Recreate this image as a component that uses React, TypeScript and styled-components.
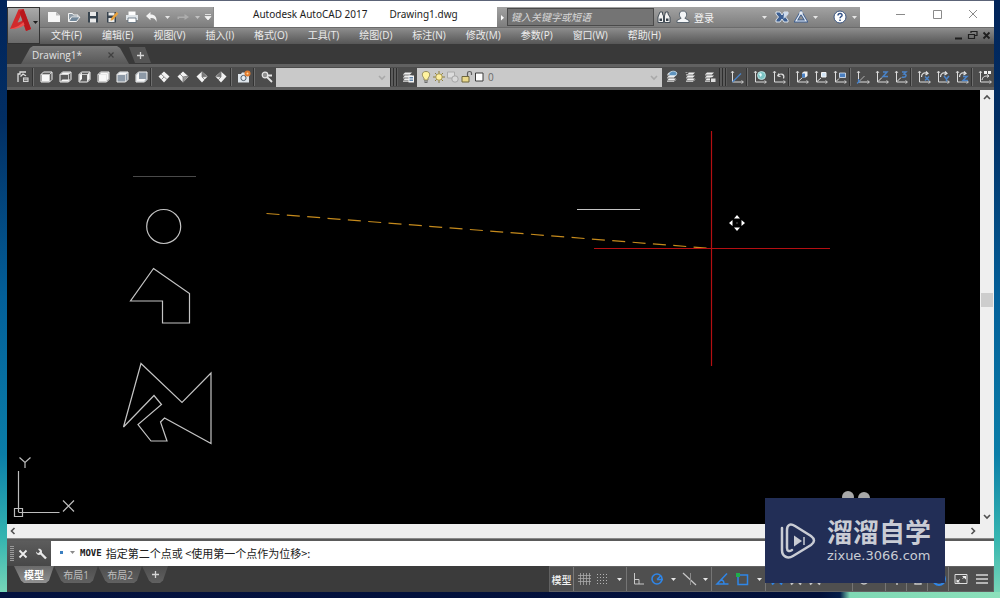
import React from "react";
import styled, { createGlobalStyle } from "styled-components";

const GlobalStyle = createGlobalStyle`
  * { box-sizing: border-box; }
  body {
    margin: 0;
    font-family: "Open Sans", "Noto Sans CJK SC", sans-serif;
    font-size: 10px;
    color: #e4e4e4;
  }
  button, input, select {
    font: inherit;
    color: inherit;
    margin: 0;
    padding: 0;
    border: 0;
    border-radius: 0;
    background: none;
  }
  svg { display: block; flex: none; }
`;

/* ---------- desktop and window ---------- */

const Desktop = styled.div`
  position: relative;
  display: flex;
  flex-direction: column;
  min-height: 100vh;
  padding: 0 6px 6px 7px;
  background:
    linear-gradient(90deg, #04123f 0, #02103a 82%, #041c48 84%, #7fd8b4 85%, #8ce0bb 100%) bottom / 100% 6px no-repeat,
    linear-gradient(#01245a 0, #022e63 20%, #03609a 50%, #0b7ea8 76%, #35b5b0 90%, #7ed9b8 100%);
`;

const Window = styled.div`
  flex: 1;
  display: flex;
  flex-direction: column;
  min-width: 0;
  background: #3b3b3b;
`;

const Header = styled.header`
  display: grid;
  grid-template-columns: 33px minmax(0, 1fr);
  border-top: 1px solid #5c6478;
  background: #ffffff;
`;

const AppButton = styled.button`
  grid-row: 1 / 3;
  display: flex;
  align-items: flex-start;
  margin-top: 6px;
  padding-left: 2px;
  border: 1px solid #333333;
  background: linear-gradient(#aaaaaa, #6a6a6a);
`;

const AppCaret = styled.span`
  padding-top: 12px;
`;

const TitleRow = styled.div`
  display: flex;
  align-items: flex-end;
  height: 26px;
`;

const QuickAccess = styled.div`
  display: flex;
  align-items: center;
  width: 174px;
  height: 20px;
  padding-left: 4px;
  background: linear-gradient(#a2a2a2, #7d7d7d);
  border-right: 1px solid #8b8b8b;
`;

const ToolButton = styled.button<{ $w?: number }>`
  display: flex;
  flex: none;
  align-items: center;
  justify-content: center;
  width: ${(p) => p.$w ?? 19}px;
  height: 18px;
`;

const Title = styled.h1`
  flex: 1;
  display: flex;
  gap: 22px;
  align-items: center;
  height: 26px;
  margin: 0;
  padding-left: 39px;
  font-family: "Noto Sans", sans-serif;
  font-size: 10px;
  font-weight: 400;
  color: #1c1c1c;
  white-space: nowrap;
`;

const InfoCenter = styled.div`
  display: flex;
  align-items: center;
  width: 363px;
  height: 20px;
  background: linear-gradient(#a2a2a2, #7d7d7d);
`;

const InfoGap = styled.span`
  flex: none;
  width: 12px;
`;

const SearchInput = styled.input`
  width: 147px;
  height: 18px;
  padding-left: 3px;
  border: 1px solid #4a4a4a;
  background: #747474;
  font-style: italic;
  &::placeholder { color: #d8d8d8; opacity: 1; }
`;

const SignIn = styled.button`
  display: flex;
  align-items: center;
  gap: 4px;
  padding-left: 3px;
  color: #f4f4f4;
`;

const Spacer = styled.div`
  flex: 1;
`;

const WindowButtons = styled.div`
  display: flex;
  align-items: center;
  width: 134px;
  height: 26px;
  padding-left: 22px;
  color: #8a8a8a;
`;

const MenuBar = styled.nav`
  display: flex;
  align-items: center;
  gap: 20px;
  height: 17px;
  padding: 0 0 2px 11px;
  background: linear-gradient(#8d8d8d, #565656);
  border-top: 1px solid #6c6c6c;
`;

const MenuItem = styled.button`
  line-height: 14px;
  color: #ececec;
  white-space: nowrap;
`;

const DocButtons = styled.div`
  display: flex;
  align-items: center;
  gap: 2px;
  padding-right: 2px;
  color: #1f1f1f;
`;

/* ---------- file tabs and toolbar ---------- */

const FileTabs = styled.div`
  display: flex;
  align-items: flex-end;
  height: 20px;
  padding-left: 14px;
  background: #393939;
`;

const FileTab = styled.button`
  display: flex;
  align-items: center;
  justify-content: space-between;
  width: 108px;
  height: 18px;
  padding: 0 14px 0 11px;
  background: linear-gradient(#7a7a7a, #585858);
  clip-path: polygon(12px 0, 96px 0, 99px 2px, 108px 100%, 0 100%, 9px 2px);
  color: #e2e2e2;
`;

const NewFileTab = styled.button`
  display: flex;
  align-items: center;
  justify-content: center;
  width: 22px;
  height: 16px;
  margin: 0 0 1px 0;
  background: #555555;
  clip-path: polygon(0 0, 16px 0, 22px 100%, 6px 100%);
`;

const Toolbar = styled.div`
  display: flex;
  align-items: center;
  height: 26px;
  padding-left: 6px;
  background: linear-gradient(#616161 0, #616161 3px, #4c4c4c 3px, #4c4c4c 23px, #5e5e5e 23px);
  overflow: hidden;
`;

const Divider = styled.span`
  flex: none;
  width: 4px;
  height: 18px;
  border-left: 1px solid #333333;
  box-shadow: inset 1px 0 #6e6e6e;
`;

const Grip = styled.span`
  flex: none;
  width: 8px;
  height: 18px;
  background: repeating-linear-gradient(90deg, #2e2e2e 0, #2e2e2e 1px, #5c5c5c 1px, #5c5c5c 3px);
`;

const Combo = styled.div<{ $grow?: boolean }>`
  display: flex;
  align-items: center;
  flex: ${(p) => (p.$grow ? "1 1 0" : "0 0 114px")};
  min-width: 0;
  height: 19px;
  padding: 0 3px;
  background: #c9c9c9;
  color: #6b6b6b;
  select {
    flex: 1;
    min-width: 0;
    appearance: none;
    padding-left: 3px;
  }
`;

/* ---------- drawing area ---------- */

const Work = styled.main`
  flex: 1;
  display: grid;
  grid-template-columns: minmax(0, 1fr) 14px;
  grid-template-rows: minmax(430px, 1fr) 14px;
  background: #efefef;
  border-bottom: 1px solid #8a8a8a;
`;

const Canvas = styled.div`
  background: #000000;
  svg { width: 100%; height: 100%; }
`;

const VScroll = styled.div`
  display: flex;
  flex-direction: column;
  align-items: center;
  justify-content: space-between;
  padding: 2px 0 3px;
  color: #505050;
`;

const Thumb = styled.span`
  width: 12px;
  height: 14px;
  margin-bottom: 14px;
  background: #cdcdcd;
`;

const HScroll = styled.div`
  grid-column: 1 / 3;
  display: flex;
  align-items: center;
  justify-content: space-between;
  padding: 0 16px 0 1px;
  color: #505050;
`;

const ScrollButton = styled.button`
  display: flex;
`;

const CommandLine = styled.form`
  display: flex;
  height: 27px;
  border-top: 2px solid #5a5a5a;
  background: #ffffff;
`;

const CommandTools = styled.div`
  display: flex;
  align-items: center;
  width: 44px;
  padding-left: 3px;
  background: linear-gradient(#5c5c5c, #474747);
`;

const Dots = styled.span`
  width: 4px;
  height: 15px;
  background: repeating-linear-gradient(#9a9a9a 0, #9a9a9a 1px, #555555 1px, #555555 2px);
`;

const Prompt = styled.label`
  display: flex;
  align-items: center;
  gap: 4px;
  padding: 0 0 2px 8px;
  font-family: "Noto Sans CJK SC", sans-serif;
  font-size: 11px;
  color: #202020;
  white-space: nowrap;
  b {
    font-family: "DejaVu Sans Mono", monospace;
    font-size: 9px;
  }
`;

const CommandInput = styled.input`
  flex: 1;
  min-width: 0;
  color: #202020;
`;

/* ---------- bottom bar ---------- */

const BottomBar = styled.footer`
  display: flex;
  justify-content: space-between;
  height: 26px;
  background: #3b3b3b;
`;

const LayoutTabs = styled.div`
  display: flex;
  padding-left: 7px;
`;

const LayoutTab = styled.button<{ $active?: boolean; $w?: number }>`
  display: flex;
  align-items: center;
  justify-content: center;
  width: ${(p) => p.$w ?? 44}px;
  height: 17px;
  background: ${(p) => (p.$active ? "linear-gradient(#6a6a6a, #909090)" : "linear-gradient(#4d4d4d, #616161)")};
  clip-path: polygon(0 0, 100% 0, calc(100% - 5px) 86%, calc(100% - 8px) 100%, 10px 100%, 7px 86%);
  color: ${(p) => (p.$active ? "#ffffff" : "#bdbdbd")};
  font-weight: ${(p) => (p.$active ? 700 : 400)};
`;

const StatusBar = styled.div`
  display: flex;
  align-items: center;
  width: 445px;
  padding-right: 2px;
  background: #4f4f4f;
  border: 1px solid #626262;
`;

const ModelButton = styled.button`
  width: 24px;
  height: 24px;
  border-right: 1px solid #7a7a7a;
  color: #f2f2f2;
  font-weight: 500;
`;

const StatusDivider = styled.span`
  flex: none;
  width: 2px;
  height: 24px;
  border-left: 1px solid #757575;
`;

/* ---------- watermark card ---------- */

const Watermark = styled.aside`
  position: absolute;
  right: 55px;
  bottom: 15px;
  display: flex;
  align-items: center;
  gap: 11px;
  width: 180px;
  height: 85px;
  padding-left: 15px;
  background: #222e56;
  color: #c9ccd4;
`;

const Brand = styled.div`
  display: flex;
  flex-direction: column;
  font-family: "Liberation Sans", "Noto Sans CJK SC", sans-serif;
  strong {
    font-size: 26px;
    line-height: 30px;
    font-weight: 700;
    white-space: nowrap;
  }
  span {
    font-family: "DejaVu Sans", sans-serif;
    font-size: 13px;
    line-height: 15px;
  }
`;

/* ---------- icons ---------- */

const Icon = ({ w = 14, h = 14, children }: { w?: number; h?: number; children: React.ReactNode }) => (
  <svg width={w} height={h} viewBox={`0 0 ${w} ${h}`} fill="none" aria-hidden="true">
    {children}
  </svg>
);

const Caret = ({ color = "#e6e6e6" }: { color?: string }) => (
  <Icon w={7} h={5}>
    <path d="M1 1h5L3.5 4z" fill={color} />
  </Icon>
);

const Chevron = ({ dir, color = "currentColor" }: { dir: "up" | "down" | "left" | "right"; color?: string }) => {
  const d = { up: "M2 7l3-3 3 3", down: "M2 4l3 3 3-3", left: "M6.500 2l-3 3 3 3", right: "M3.500 2l3 3-3 3" }[dir];
  return (
    <Icon w={10} h={10}>
      <path d={d} stroke={color} strokeWidth="1.6" />
    </Icon>
  );
};

const Plus = () => (
  <Icon w={9} h={9}>
    <path d="M4.500 1v7M1 4.500h7" stroke="#d6d6d6" strokeWidth="1.300" />
  </Icon>
);

const Cube = ({ face }: { face: number }) => (
  <Icon>
    <path d="M2 4.500L4.500 2H13v7.500L10.500 12H2z" fill={face > 3 ? "#8d99a6" : "#5b5b5b"} stroke="#f0f0f0" />
    {face === 0 && <path d="M3 5h7v6.500H3z" fill="#f7f7f7" />}
    {face === 1 && <path d="M2.500 4.500L5 2.500h7.500L10 4.500zM4.500 9.500h8L10 11.500H2.500z" fill="#f7f7f7" />}
    {face === 2 && <path d="M2.500 5L5 2.500V9L2.500 11.500zM10 5l2.500-2.500V9L10 11.500z" fill="#f7f7f7" />}
    {face === 3 && <path d="M5 2.500h7.500V9L10 11.500H3V5z" fill="#f7f7f7" />}
    {face === 4 && <path d="M2.500 4.500L5 2.500h7.500L10 5H2.500z" fill="#f7f7f7" />}
    {face === 5 && <path d="M2.500 5L5 2.500V9h7l-2 2.500H2.500z" fill="#f7f7f7" />}
    {face < 5 && <path d="M2 4.500h8.500V12M10.500 4.500L13 2" stroke="#e2e2e2" strokeWidth=".8" />}
  </Icon>
);

const IsoCube = ({ face }: { face: number }) => (
  <Icon>
    <path d="M7 1.500l5.500 5L7 12.500 1.500 6.500z" fill="#f2f2f2" />
    {face === 0 && <path d="M4 4l6 5.500M7 7L4.500 9.500" stroke="#777" strokeWidth=".8" />}
    {face === 1 && <path d="M7 7l5-1-5 6zM4 4l3 3" fill="#9c9c9c" stroke="#777" strokeWidth=".8" />}
    {face === 2 && <path d="M7 2l4.500 4.500L7 7zM7 7l3 3" fill="#777" stroke="#777" strokeWidth=".8" />}
    {face === 3 && <path d="M7 2L2.500 6.500 7 7zM7 7l-3 3" fill="#777" stroke="#777" strokeWidth=".8" />}
  </Icon>
);

const Camera = () => (
  <Icon>
    <path d="M1 4h3l1-1.500h3L9 4h3v8.500H1z" fill="#dfe6ec" />
    <circle cx="6.500" cy="8" r="2.600" fill="#e9eef2" stroke="#4c5a66" />
    <circle cx="10.500" cy="3.500" r="3" fill="#e07a2c" />
    <circle cx="10.500" cy="3.500" r="1" fill="#ffd9a0" />
  </Icon>
);

const Layers = ({ variant = 0 }: { variant?: number }) => (
  <Icon>
    <path d="M4 2.500h7L9 4.500H2zM4 5.500h7l-2 2H2zM4 8.500h7l-2 2H2z" fill="#eeeeee" />
    <path d="M2 5h7M2 8h7M2 11.500h7l2-2" stroke="#d5d5d5" strokeWidth=".8" />
    {variant === 0 && (
      <>
        <path d="M7.500 5.500H13v7H7.500z" fill="#f4f4f4" />
        <path d="M8.500 7.500h3.500M8.500 9h3.500M8.500 10.500h3.500" stroke="#3c6796" strokeWidth=".8" />
      </>
    )}
    {variant === 1 && <path d="M4 4.500C4 1 10 0 12 3l-1 2.500H5z" fill="#5f93bd" stroke="#cfe4f3" strokeWidth=".8" />}
    {variant === 2 && <path d="M1 1.500h3v2H1z" fill="#9a9a9a" stroke="#4c4c4c" />}
    {variant === 3 && <path d="M7.500 8H13v4.500H7.500z" fill="#dedede" stroke="#4c4c4c" />}
  </Icon>
);

const UcsIcon = ({ kind }: { kind: string }) => (
  <Icon>
    <path d="M2.500 1.500v10.500H13" stroke="#dcdcdc" />
    <path d="M1 3l1.500-2L4 3M11.500 10.500l2 1.500-2 1.500" stroke="#dcdcdc" strokeWidth=".8" />
    {kind === "ucs" && <path d="M2.500 12L11 3.500" stroke="#4a83c8" strokeWidth="1.200" />}
    {kind === "world" && (
      <>
        <circle cx="8.500" cy="5.500" r="4" fill="#7cc4c4" stroke="#cdeeee" strokeWidth=".8" />
        <path d="M6 4l2-1 1 2-1.500 2z" fill="#e2fafa" />
      </>
    )}
    {kind === "prev" && <path d="M5.500 6l1.500-2.500M5.500 6l3 .5M6 5.500c3-3 7-1 5.500 3" stroke="#e2e2e2" strokeWidth="1.200" />}
    {kind === "face" && (
      <>
        <path d="M3 11.500L7 8" stroke="#dcdcdc" />
        <path d="M7 3l2-1.500h3.500V6l-2 1.500H7z" fill="#f0f0f0" />
        <path d="M7 3.500h3v4H7z" fill="#4a83c8" />
      </>
    )}
    {kind === "object" && (
      <>
        <path d="M3 11.500L7 8" stroke="#dcdcdc" />
        <path d="M7.500 2.500h4.500v4.500H7.500z" fill="#cfe3f5" stroke="#f4f4f4" />
      </>
    )}
    {kind === "view" && (
      <>
        <path d="M3 11.500L6 8.500" stroke="#dcdcdc" />
        <path d="M6.500 3h6v4.500h-6z" fill="#4a7fc0" stroke="#dfe9f4" strokeWidth=".8" />
      </>
    )}
    {kind === "origin" && (
      <>
        <path d="M2.500 12l6-6" stroke="#b0b0b0" />
        <path d="M2.500 13V9M1 13.500l3-3" stroke="#4a83c8" strokeWidth="1.200" />
      </>
    )}
    {kind === "z" && <path d="M3 11.500L7 7.500" stroke="#dcdcdc" />}
    {kind === "z" && <path d="M8 2h4L8 6.500h5" stroke="#4a83c8" strokeWidth="1.500" />}
    {kind === "3" && <path d="M3 11.500L7 7.500" stroke="#dcdcdc" />}
    {kind === "3" && <path d="M8 2h4L10 4c3 0 3 4-2 3" stroke="#4a83c8" strokeWidth="1.500" />}
    {kind.startsWith("rot") && <path d="M4.500 7c0-4 3-5 6-3.500M9 1.500l2 2-2.500 1.500" stroke="#e2e2e2" strokeWidth="1.200" />}
    {kind === "rotx" && <path d="M8 6.500l4 4M12 6.500l-4 4" stroke="#4a83c8" strokeWidth="1.500" />}
    {kind === "roty" && <path d="M8 6l2.500 3L13 6M10.500 9v2.500" stroke="#4a83c8" strokeWidth="1.500" />}
    {kind === "rotz" && <path d="M8 6.500h4l-4 4h5" stroke="#4a83c8" strokeWidth="1.500" />}
    {kind === "apply" && (
      <>
        <path d="M4 10c1-4 3-4 6-4M9 4.500l2 1.500-2 1.500" stroke="#e2e2e2" />
        <path d="M6 1h3v3H6zM10 1h3v3h-3z" fill="#f0f0f0" />
      </>
    )}
  </Icon>
);

const menus = [
  "文件(F)", "编辑(E)", "视图(V)", "插入(I)", "格式(O)", "工具(T)",
  "绘图(D)", "标注(N)", "修改(M)", "参数(P)", "窗口(W)", "帮助(H)",
];

const ucsGroups = [
  ["ucs"],
  ["world", "prev"],
  ["face", "object", "view"],
  ["origin", "z", "3"],
  ["rotx", "roty", "rotz"],
  ["apply"],
];

function TitleBar() {
  return (
    <Header>
      <AppButton aria-label="应用程序菜单">
        <svg width="22" height="25" viewBox="0 0 22 25" aria-hidden="true">
          <path d="M0 21L8.500 1.500 13.500 1l7.500 20-5 2-2-6c-3 1.500-6 2.500-9 3.500zM11 7L7.500 14.500c2-.3 3.600-1 5-2z" fill="#d12a2d" fillRule="evenodd" />
          <path d="M13.500 1L21 21l-5 2L9.500 4z" fill="#b9181d" />
          <path d="M0 21c4-1 9-2.500 13.500-7l1 3C10 20 5 21.500 0 21z" fill="#ee5150" />
        </svg>
        <AppCaret><Caret color="#1e1e1e" /></AppCaret>
      </AppButton>
      <TitleRow>
        <QuickAccess>
          <ToolButton $w={20} aria-label="新建">
            <Icon>
              <path d="M1 2h8l4 3.500V12H1z" fill="#f6f6f6" />
              <path d="M9 2v3.500h4z" fill="#b9b9b9" />
            </Icon>
          </ToolButton>
          <ToolButton aria-label="打开">
            <Icon>
              <path d="M1.500 11.500v-8h4l1 1.500H11v2M1.500 11.500L4.500 7H13l-3.500 4.500z" fill="#8d9aa5" stroke="#f4f4f4" />
              <path d="M5 7.500h7l-3 3.500H3z" fill="#71879a" />
            </Icon>
          </ToolButton>
          <ToolButton aria-label="保存">
            <Icon>
              <path d="M2 2h10v10.500H2z" fill="#38444f" />
              <path d="M4 2h6v4H4zM4 8.500h6v4H4z" fill="#eaeaea" />
            </Icon>
          </ToolButton>
          <ToolButton $w={20} aria-label="另存为">
            <Icon>
              <path d="M2 2h9v10.500H2z" fill="#38444f" />
              <path d="M3.500 2.500h6v3h-6zM3.500 8h6v4h-6z" fill="#eaeaea" />
              <path d="M6 8.500L11.500 2l2 1.500L8 10l-2.500.8z" fill="#e9a13b" />
            </Icon>
          </ToolButton>
          <ToolButton $w={20} aria-label="打印">
            <Icon>
              <path d="M3.500 1.500h7V5h-7z" fill="#ffffff" />
              <path d="M1 5h12v5H1z" fill="#dfe4e8" />
              <path d="M3 8h8v4.500H3z" fill="#ffffff" stroke="#5a6b79" strokeWidth=".8" />
            </Icon>
          </ToolButton>
          <ToolButton aria-label="放弃">
            <Icon>
              <path d="M1 6l4.500-4v2.500C10 4.500 12 7 11.500 12 10.500 9 9 7.800 5.500 8v2.300z" fill="#f2f2f2" />
            </Icon>
          </ToolButton>
          <ToolButton $w={12} aria-label="放弃列表"><Caret /></ToolButton>
          <ToolButton aria-label="重做">
            <Icon>
              <path d="M1.500 9V6.500h7V4L13 7l-4.500 3V8H3v1z" fill="#adadad" />
            </Icon>
          </ToolButton>
          <ToolButton $w={11} aria-label="重做列表"><Caret color="#c2c2c2" /></ToolButton>
          <ToolButton $w={10} aria-label="自定义快速访问工具栏">
            <Icon w={8} h={8}>
              <path d="M1 1.500h6M1 3.500h6L4 7z" stroke="#f4f4f4" fill="#f4f4f4" strokeWidth=".8" />
            </Icon>
          </ToolButton>
        </QuickAccess>
        <Title>
          <span>Autodesk AutoCAD 2017</span>
          <span>Drawing1.dwg</span>
        </Title>
        <InfoCenter>
          <ToolButton $w={10} aria-label="展开搜索">
            <Icon w={5} h={7}><path d="M1 1v5.500L4 3.800z" fill="#ffffff" /></Icon>
          </ToolButton>
          <SearchInput aria-label="搜索" placeholder="键入关键字或短语" />
          <ToolButton aria-label="查找">
            <Icon>
              <path d="M3 2h2.500v2L6.500 6v6.500H1V7zM8.500 2H11v2l2 3v5.500H7.500V6z" fill="#f2f2f2" stroke="#37424c" strokeWidth=".9" />
              <path d="M2.500 8.500h2.500v2.500H2.500zM9 8.500h2.500v2.500H9z" fill="#37424c" />
            </Icon>
          </ToolButton>
          <SignIn>
            <Icon>
              <path d="M7 1c5 0 4 6 1.800 7.200L13 10.500v2H1v-2l4.200-2.300C3 7 2 1 7 1z" fill="#f4f6f8" stroke="#4f5b66" strokeWidth=".9" />
            </Icon>
            登录
          </SignIn>
          <Spacer />
          <ToolButton $w={16} aria-label="登录选项"><Caret /></ToolButton>
          <ToolButton $w={20} aria-label="Exchange">
            <Icon>
              <path d="M1 2h4l2 3 2-3h4v2l-2.500 3L13 10v2H9L7 9l-2 3H1v-2l2.500-3L1 4z" fill="#3d5f92" stroke="#e8eef5" strokeWidth=".9" />
              <path d="M9 2h4v2l-4.500 5z" fill="#cfdced" />
            </Icon>
          </ToolButton>
          <ToolButton $w={18} aria-label="Autodesk 360">
            <Icon>
              <path d="M7 2.500L12 11H2z" stroke="#3d5f92" strokeWidth="3" />
              <path d="M7 2.500L12 11H2z" stroke="#e8eef5" strokeWidth="1.200" />
              <circle cx="7" cy="3" r="1.800" fill="#e8eef5" />
            </Icon>
          </ToolButton>
          <ToolButton $w={10} aria-label="360 选项"><Caret /></ToolButton>
          <InfoGap />
          <ToolButton $w={16} aria-label="帮助">
            <Icon>
              <circle cx="7" cy="7" r="6" fill="#ffffff" stroke="#3b5580" />
              <path d="M5 5.500c0-3 4.500-2.500 4 0-.3 1-2 1.300-2 2.800M7 9.500v1.500" stroke="#2f4f86" strokeWidth="1.500" />
            </Icon>
          </ToolButton>
          <ToolButton $w={12} aria-label="帮助选项"><Caret /></ToolButton>
        </InfoCenter>
        <WindowButtons>
          <ToolButton $w={36} aria-label="最小化"><Icon w={10} h={10}><path d="M1 5.500h9" stroke="currentColor" /></Icon></ToolButton>
          <ToolButton $w={37} aria-label="最大化"><Icon w={10} h={10}><path d="M1.500 1.500h8v8h-8z" stroke="currentColor" /></Icon></ToolButton>
          <ToolButton $w={36} aria-label="关闭"><Icon w={10} h={10}><path d="M1 1l8 8M9 1L1 9" stroke="currentColor" /></Icon></ToolButton>
        </WindowButtons>
      </TitleRow>
      <MenuBar>
        {menus.map((m) => <MenuItem key={m}>{m}</MenuItem>)}
        <Spacer />
        <DocButtons>
          <ToolButton $w={12} aria-label="最小化文档"><Icon w={9} h={9}><path d="M1 7.500h7" stroke="currentColor" strokeWidth="2" /></Icon></ToolButton>
          <ToolButton $w={12} aria-label="还原文档">
            <Icon w={11} h={10}><path d="M4 3V1.500h6v4H7.500M1.500 4.500h6v4h-6z" stroke="currentColor" strokeWidth="1.200" /></Icon>
          </ToolButton>
          <ToolButton $w={12} aria-label="关闭文档"><Icon w={9} h={9}><path d="M1.500 1.500l6 6M7.500 1.500l-6 6" stroke="currentColor" strokeWidth="1.800" /></Icon></ToolButton>
        </DocButtons>
      </MenuBar>
    </Header>
  );
}

function ToolRow() {
  return (
    <Toolbar>
      <ToolButton aria-label="命名视图">
        <Icon>
          <path d="M2 12V4h2V2h6M4.500 6.500L7 4l3 2" stroke="#dedede" strokeWidth="1.300" />
          <path d="M6.500 7H13v5.500H6.500z" fill="#d5d5d5" stroke="#3e3e3e" strokeWidth=".8" />
          <path d="M8 9h3.500M8 10.500h3.500" stroke="#555" strokeWidth=".8" />
        </Icon>
      </ToolButton>
      <Divider />
      {[0, 1, 2, 3, 4, 5].map((f) => <ToolButton key={f} aria-label={`正交视图 ${f + 1}`}><Cube face={f} /></ToolButton>)}
      <Divider />
      {[0, 1, 2, 3].map((f) => <ToolButton key={f} aria-label={`等轴测 ${f + 1}`}><IsoCube face={f} /></ToolButton>)}
      <Divider />
      <ToolButton aria-label="相机"><Camera /></ToolButton>
      <Divider />
      <ToolButton aria-label="缩放">
        <Icon>
          <circle cx="5" cy="5" r="2.800" fill="#8f8f8f" stroke="#e6e6e6" strokeWidth="1.200" />
          <path d="M7 7l5 5M7 5.500h5" stroke="#e6e6e6" strokeWidth="1.800" />
        </Icon>
      </ToolButton>
      <Combo>
        <select aria-label="视图"><option /></select>
        <Chevron dir="down" color="#a9a9a9" />
      </Combo>
      <Grip />
      <ToolButton aria-label="图层特性"><Layers /></ToolButton>
      <Combo $grow>
        <Icon w={12} h={14}>
          <path d="M6 1.500c5 0 4 5 2 6.500v2H4V8C2 6.500 1 1.500 6 1.500z" fill="#fff3a0" stroke="#8d8554" strokeWidth=".9" />
          <path d="M4 11h4M4.500 12.500h3" stroke="#6d6d6d" />
        </Icon>
        <Icon w={14} h={14}>
          <path d="M7 1v12M1 7h12M3 3l8 8M11 3l-8 8" stroke="#8a7d3f" />
          <circle cx="7" cy="7" r="3.200" fill="#fff0a0" stroke="#9a8c45" strokeWidth=".8" />
        </Icon>
        <Icon w={14} h={14}>
          <path d="M1.500 2h7v6h-7z" fill="#dcdcdc" stroke="#aaaaaa" />
          <circle cx="9" cy="9" r="3.200" fill="#d8d8d8" stroke="#a5a5a5" />
        </Icon>
        <Icon w={13} h={14}>
          <path d="M7.500 6.500V3c0-2 4-2 4 0v2" stroke="#5f5f5f" strokeWidth="1.200" />
          <path d="M2 6.500h7v5.500H2z" fill="#ead88a" stroke="#6f673c" />
        </Icon>
        <Icon w={12} h={14}><path d="M2.500 3h7.500v8H2.500z" fill="#ffffff" stroke="#3a3a3a" /></Icon>
        <select aria-label="图层" defaultValue="0"><option>0</option></select>
        <Chevron dir="down" color="#a9a9a9" />
      </Combo>
      <ToolButton aria-label="置为当前"><Layers variant={1} /></ToolButton>
      <ToolButton aria-label="上一个图层"><Layers variant={2} /></ToolButton>
      <ToolButton aria-label="图层状态"><Layers variant={3} /></ToolButton>
      <Grip />
      {ucsGroups.map((group, i) => (
        <React.Fragment key={i}>
          {i > 0 && <Divider />}
          {group.map((k) => <ToolButton key={k} aria-label={`UCS ${k}`}><UcsIcon kind={k} /></ToolButton>)}
        </React.Fragment>
      ))}
    </Toolbar>
  );
}

function Drawing() {
  return (
    <Canvas>
      <svg role="img" aria-label="图形">
        <path d="M126 86.500h63" stroke="#4a4a4a" fill="none" />
        <g stroke="#c4c4c4" strokeWidth="1.200" fill="none">
          <circle cx="156.700" cy="136.500" r="17" />
          <path d="M146.500 178.500L182.500 203.500V233H155.500V211H123.500z" />
          <path d="M134 273.500L175 312.500 204 283V353.500L157.500 328 153.500 332 160 351H144L131 334.500 154.500 314.500 147 305.500 116.500 337z" />
          <path d="M570 119.500h63" />
        </g>
        <path d="M259.500 123.500L705 158.500" stroke="#c58a1c" strokeDasharray="13 7.400" strokeWidth="1.200" />
        <path d="M704.500 41v235M587 158.500h236" stroke="#b40f12" strokeWidth="1.200" />
        <path d="M730 125l3 3.500h-6zM730 141l3-3.500h-6zM722 133l3.500-3v6zM738 133l-3.500-3v6z" fill="#ffffff" />
        <path d="M729.500 133h1" stroke="#aaaaaa" />
        <g stroke="#bdbdbd" fill="none" strokeWidth="1.200">
          <path d="M11.500 381v41M11.500 422.500h41M7.500 418.500h8v8h-8z" />
          <path d="M12.500 367.500l5.500 5 5.500-5M18 372.500v5.500M56 410.500l11 11M67 410.500l-11 11" />
        </g>
        <circle cx="841" cy="407" r="6" fill="#a8a8a8" />
        <circle cx="857" cy="408" r="6" fill="#a8a8a8" />
      </svg>
    </Canvas>
  );
}

const blue = "#2f86e8";
const grey = "#c8c8c8";

function Status() {
  return (
    <StatusBar>
      <ModelButton>模型</ModelButton>
      <ToolButton aria-label="栅格">
        <Icon><path d="M3.500 1v12M6.500 1v12M9.500 1v12M12.500 1v12M1 3.500h13M1 6.500h13M1 9.500h13" stroke="#a9a9a9" strokeWidth=".8" /></Icon>
      </ToolButton>
      <ToolButton aria-label="捕捉">
        <Icon><path d="M1 2.500h12M1 5.500h12M1 8.500h12M1 11.500h12" stroke="#b5b5b5" strokeDasharray="1 2" /></Icon>
      </ToolButton>
      <ToolButton $w={14} aria-label="捕捉选项"><Caret /></ToolButton>
      <StatusDivider />
      <ToolButton aria-label="正交">
        <Icon><path d="M3.500 1v11H13M3.500 7.500H8V12" stroke={grey} /></Icon>
      </ToolButton>
      <ToolButton aria-label="极轴">
        <Icon>
          <circle cx="7" cy="7" r="5" stroke={blue} strokeWidth="1.600" />
          <path d="M7 7.500h6M7 7.500l4-4" stroke={blue} strokeWidth="1.400" />
        </Icon>
      </ToolButton>
      <ToolButton $w={14} aria-label="极轴选项"><Caret /></ToolButton>
      <ToolButton aria-label="等轴测草图">
        <Icon w={16}><path d="M1 1l13 12" stroke={grey} strokeWidth="1.200" /><path d="M8.500 1v12" stroke="#8a8a8a" /></Icon>
      </ToolButton>
      <ToolButton $w={12} aria-label="等轴测选项"><Caret /></ToolButton>
      <StatusDivider />
      <ToolButton $w={18} aria-label="对象捕捉追踪">
        <Icon><path d="M12 1.500L2 12h11.500M6 8c2 0 3 2 3 4" stroke={blue} strokeWidth="1.500" /></Icon>
      </ToolButton>
      <ToolButton $w={22} aria-label="对象捕捉">
        <Icon>
          <path d="M3 3h9.500v9.500H3z" stroke={blue} strokeWidth="1.500" />
          <path d="M1 1h4v4H1z" fill="#1fae4c" />
        </Icon>
      </ToolButton>
      <ToolButton $w={12} aria-label="捕捉设置"><Caret /></ToolButton>
      <StatusDivider />
      {[blue, grey, grey].map((c, i) => (
        <ToolButton key={i} aria-label={`注释 ${i + 1}`}>
          <Icon><path d="M2 12.500L7 7l5 5.500" stroke={c} strokeWidth="2" /></Icon>
        </ToolButton>
      ))}
      <Spacer />
      <StatusDivider />
      <ToolButton aria-label="工作空间"><Icon><circle cx="7" cy="8" r="4" stroke={grey} strokeWidth="1.400" /></Icon></ToolButton>
      <InfoGap />
      <StatusDivider />
      <ToolButton aria-label="监视器"><Icon><path d="M7 2v11M3 7h8" stroke={grey} strokeWidth="1.400" /></Icon></ToolButton>
      <StatusDivider />
      <ToolButton aria-label="隔离对象"><Icon><path d="M4 4h6v8H4z" stroke={grey} strokeWidth="1.400" /></Icon></ToolButton>
      <StatusDivider />
      <ToolButton aria-label="硬件加速"><Icon><circle cx="7" cy="7" r="6" stroke={blue} strokeWidth="2" /></Icon></ToolButton>
      <StatusDivider />
      <ToolButton $w={22} aria-label="全屏显示">
        <Icon>
          <path d="M1 2.500h12v9H1z" stroke="#dedede" />
          <path d="M8 4h4v3.500zM2.500 7v3.500H6z" fill="#f0f0f0" />
          <path d="M8.500 6.500L10.500 5M4 9l2-1.500" stroke="#f0f0f0" />
        </Icon>
      </ToolButton>
      <ToolButton aria-label="自定义">
        <Icon><path d="M1 3h12M1 7h12M1 11h12" stroke="#d8d8d8" strokeWidth="1.500" /></Icon>
      </ToolButton>
    </StatusBar>
  );
}

export default function App() {
  return (
    <Desktop>
      <GlobalStyle />
      <Window>
        <TitleBar />
        <FileTabs>
          <FileTab>
            Drawing1*
            <Icon w={8} h={8}><path d="M1.500 1.500l5 5M6.500 1.500l-5 5" stroke="#3f3f3f" strokeWidth="1.200" /></Icon>
          </FileTab>
          <NewFileTab aria-label="新图形"><Plus /></NewFileTab>
        </FileTabs>
        <ToolRow />
        <Work>
          <Drawing />
          <VScroll>
            <ScrollButton aria-label="向上滚动"><Chevron dir="up" /></ScrollButton>
            <Thumb />
            <ScrollButton aria-label="向下滚动"><Chevron dir="down" /></ScrollButton>
          </VScroll>
          <HScroll>
            <ScrollButton aria-label="向左滚动"><Chevron dir="left" /></ScrollButton>
            <ScrollButton aria-label="向右滚动"><Chevron dir="right" /></ScrollButton>
          </HScroll>
        </Work>
        <CommandLine>
          <CommandTools>
            <Dots />
            <ToolButton $w={18} type="button" aria-label="关闭命令行">
              <Icon w={10} h={10}><path d="M1.500 1.500l7 7M8.500 1.500l-7 7" stroke="#eeeeee" strokeWidth="1.800" /></Icon>
            </ToolButton>
            <ToolButton $w={18} type="button" aria-label="自定义命令行">
              <Icon w={12} h={12}>
                <path d="M5 4.500l6 6" stroke="#e8e8e8" strokeWidth="2.400" />
                <path d="M1 3.500L3 5.500l2-2-2-2.500c3-1 5 2 3.500 4.500C5 8 1 7 1 3.500z" fill="#e8e8e8" />
              </Icon>
            </ToolButton>
          </CommandTools>
          <Prompt htmlFor="command">
            <Icon w={17} h={9}>
              <path d="M1 3h3v3H1z" fill="#3b7fc0" />
              <path d="M11 3h5l-2.500 3z" fill="#8a8a8a" />
            </Icon>
            <b>MOVE</b>
            <span>指定第二个点或 &lt;使用第一个点作为位移&gt;:</span>
          </Prompt>
          <CommandInput id="command" />
        </CommandLine>
        <BottomBar>
          <LayoutTabs>
            <LayoutTab $active $w={40}>模型</LayoutTab>
            <LayoutTab>布局1</LayoutTab>
            <LayoutTab>布局2</LayoutTab>
            <LayoutTab $w={26} aria-label="新建布局"><Plus /></LayoutTab>
          </LayoutTabs>
          <Status />
        </BottomBar>
      </Window>
      <Watermark>
        <svg width="36" height="38" viewBox="0 0 36 38" fill="none" aria-hidden="true">
          <path d="M2 6v22c0 7 6 9 11 6l18-11c4-3 4-6 0-9L15 4C10 1 7 3 7 8v18c0 3 2 4 5 2" stroke="#c9ccd4" strokeWidth="2.500" strokeLinecap="round" />
          <path d="M14 13.500l8 5.500-8 5.500z" fill="#c9ccd4" />
          <path d="M24 15v8" stroke="#c9ccd4" strokeWidth="1.500" />
        </svg>
        <Brand>
          <strong>溜溜自学</strong>
          <span>zixue.3066.com</span>
        </Brand>
      </Watermark>
    </Desktop>
  );
}
